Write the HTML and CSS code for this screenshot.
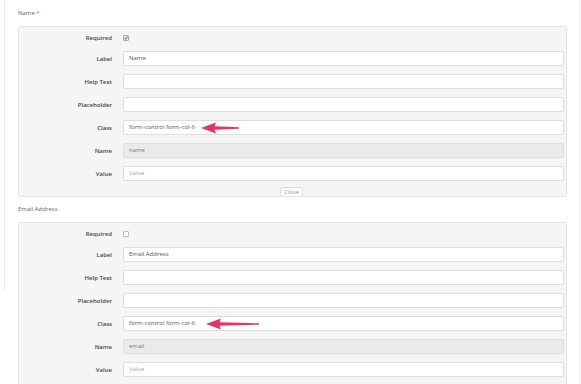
FILE: index.html
```html
<!DOCTYPE html>
<html lang="en">
<head>
    <meta charset="UTF-8">
    <meta name="viewport" content="width=device-width, initial-scale=1.0">
    <title>Form Builder</title>
    <link rel="stylesheet" href="styles.css">
</head>
<body>
    <div class="page">
        <div class="sidebar"></div>
        <div class="main">
            <div class="field-title">Name <span class="req">*</span></div>
            <div class="panel">
                <div class="row row-check">
                    <label>Required</label>
                    <span class="check checked">
                        <svg width="4" height="4" viewBox="0 0 10 10"><path d="M1.5 5.5 L4 8 L8.5 2" fill="none" stroke="#555" stroke-width="2.2"/></svg>
                    </span>
                </div>
                <div class="row">
                    <label>Label</label>
                    <div class="input">Name</div>
                </div>
                <div class="row">
                    <label>Help Text</label>
                    <div class="input"></div>
                </div>
                <div class="row">
                    <label>Placeholder</label>
                    <div class="input"></div>
                </div>
                <div class="row">
                    <label>Class</label>
                    <div class="input has-arrow">form-control form-col-6
                        <svg class="arrow arrow-short" width="38" height="12" viewBox="0 0 38 12"><path d="M0 6 L15 0.5 L13.5 4.2 L38 5.2 L38 6.8 L13.5 7.8 L15 11.5 Z" fill="#e8335f"/></svg>
                    </div>
                </div>
                <div class="row">
                    <label>Name</label>
                    <div class="input disabled">name</div>
                </div>
                <div class="row">
                    <label>Value</label>
                    <div class="input placeholder">Value</div>
                </div>
                <div class="close-bar"><span class="close-tab">Close</span></div>
            </div>

            <div class="field-title">Email Address</div>
            <div class="panel">
                <div class="row row-check">
                    <label>Required</label>
                    <span class="check"></span>
                </div>
                <div class="row">
                    <label>Label</label>
                    <div class="input">Email Address</div>
                </div>
                <div class="row">
                    <label>Help Text</label>
                    <div class="input"></div>
                </div>
                <div class="row">
                    <label>Placeholder</label>
                    <div class="input"></div>
                </div>
                <div class="row">
                    <label>Class</label>
                    <div class="input has-arrow">form-control form-col-6
                        <svg class="arrow arrow-long" width="53" height="12" viewBox="0 0 53 12"><path d="M0 6 L15 0.5 L13.5 4.2 L53 5.3 L53 6.7 L13.5 7.8 L15 11.5 Z" fill="#e8335f"/></svg>
                    </div>
                </div>
                <div class="row">
                    <label>Name</label>
                    <div class="input disabled">email</div>
                </div>
                <div class="row">
                    <label>Value</label>
                    <div class="input placeholder">Value</div>
                </div>
            </div>
        </div>
    </div>
</body>
</html>
```

FILE: styles.css
```css
body {
    margin: 0;
    font-family: "Open Sans", Arial, sans-serif;
    background: #fff;
    color: #333;
    overflow: hidden;
}
.page {
    display: flex;
    align-items: flex-start;
    width: 580px;
}
.sidebar {
    width: 4px;
    height: 290px;
    border-right: 1px solid #ececec;
}
.main {
    flex: 1;
    padding: 0 12px 0 13px;
    border-right: 1px solid #ececec;
    min-height: 400px;
}
.field-title {
    font-size: 6px;
    line-height: 10px;
    color: #666;
    margin: 8px 0 8px;
}
.panel + .field-title {
    margin-top: 7px;
}
.req {
    color: #d9534f;
}
.panel {
    background: #f5f5f5;
    border: 1px solid #e4e4e4;
    border-radius: 2px;
    padding: 5px 2px 0 0;
}
.row {
    display: flex;
    align-items: center;
    height: 15px;
    margin-bottom: 8px;
}
.row-check {
    height: 11px;
}
.row label {
    width: 93px;
    flex: none;
    text-align: right;
    font-size: 6px;
    font-weight: 600;
    color: #444;
    margin-right: 11px;
}
.input {
    flex: 1;
    height: 15px;
    box-sizing: border-box;
    background: #fff;
    border: 1px solid #dedede;
    border-radius: 2px;
    font-size: 6px;
    line-height: 13px;
    padding-left: 5px;
    color: #555;
}
.input.disabled {
    background: #eaeaea;
    color: #777;
}
.input.placeholder {
    color: #9aa8c0;
}
.has-arrow {
    position: relative;
}
.arrow {
    position: absolute;
    top: 1px;
}
.arrow-short {
    left: 77px;
}
.arrow-long {
    left: 82px;
}
.check {
    width: 4px;
    height: 4px;
    border: 1px solid #bbb;
    border-radius: 1px;
    background: #fff;
    display: flex;
    align-items: center;
    justify-content: center;
}
.check.checked {
    background: #e4e4e4;
    border-color: #aaa;
}
.close-bar {
    display: flex;
    justify-content: center;
    margin-top: -2px;
}
.close-tab {
    font-size: 6px;
    line-height: 8px;
    padding: 0 3px;
    color: #999;
    background: #fff;
    border: 1px solid #ddd;
    border-bottom: none;
    border-radius: 2px 2px 0 0;
}
```
